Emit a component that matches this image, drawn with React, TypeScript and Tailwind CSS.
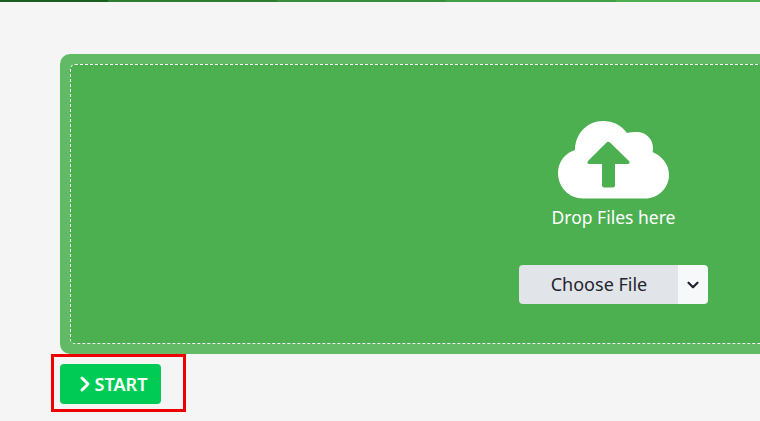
import { ChevronDown, ChevronRight } from "lucide-react"

function CloudUpload() {
  return (
    <svg viewBox="0 0 112 78" className="h-[78px] w-[112px]">
      <path
        fill="#fff"
        d="M25 77.500 C11 77.500 0 66 0 52 C0 41 7 32 17 29 C17 13 29 0 45 0 C55 0 63 4 69 12 C72 11 75 11 79 11 C88 11 95 18 95 27 C95 29 95 30 94.500 31 C104 35 111 43 111 54 C111 67 100 77.500 87 77.500 Z"
      />
      <path
        fill="#4caf50"
        d="M46 66.500 C45 66.500 44 65.500 44 64.500 V43 H31 C29.500 43 29 41 30 40 L48.500 21.500 C49.500 20.500 51 20.500 52 21.500 L71 40 C72 41 71.500 43 70 43 H57 V64.500 C57 65.500 56 66.500 55 66.500 Z"
      />
    </svg>
  )
}

export default function App() {
  return (
    <div className="h-[421px] w-[760px] overflow-hidden bg-[#f5f5f5] font-['Noto_Sans','Open_Sans',sans-serif]">
      <div className="flex h-[2px]">
        <div className="w-[108px] bg-[#1b5e20]" />
        <div className="w-[169px] bg-[#2e7d32]" />
        <div className="w-[169px] bg-[#388e3c]" />
        <div className="w-[170px] bg-[#43a047]" />
        <div className="flex-1 bg-[#4caf50]" />
      </div>

      <div className="pl-[60px] pt-[52px]">
        <div className="w-[800px] rounded-[10px] bg-[#62b966] p-[10px]">
          <div className="flex h-[280px] flex-col rounded-[5px] border border-dashed border-white bg-[#4caf50] pl-[448px]">
            <div className="flex w-[189px] flex-col items-center pt-[56px]">
              <CloudUpload />
              <span className="mt-[6px] text-[17.5px] leading-[24px] text-white">Drop Files here</span>
              <div className="mt-[36px] flex h-[39px] w-[189px] overflow-hidden rounded-[4px]">
                <button className="flex-1 bg-[#e1e4e8] pl-[1px] text-[18px] text-[#1f2430]">Choose File</button>
                <button className="flex w-[30px] items-center justify-center bg-[#f6f8fa] text-[#1f2430]">
                  <ChevronDown size={18} strokeWidth={3} />
                </button>
              </div>
            </div>
          </div>
        </div>

        <div className="relative mt-[10px]">
          <button className="flex h-[40px] w-[101px] items-center justify-center gap-[2px] rounded-[4px] bg-[#00cc55] pl-[3px] text-[18px] font-semibold text-white">
            <ChevronRight size={24} strokeWidth={3} className="-mr-[4px] -ml-[4px]" />
            START
          </button>
          <div className="absolute -top-[10px] -left-[9px] h-[58px] w-[135px] border-[3px] border-[#ee0000]" />
        </div>
      </div>
    </div>
  )
}
